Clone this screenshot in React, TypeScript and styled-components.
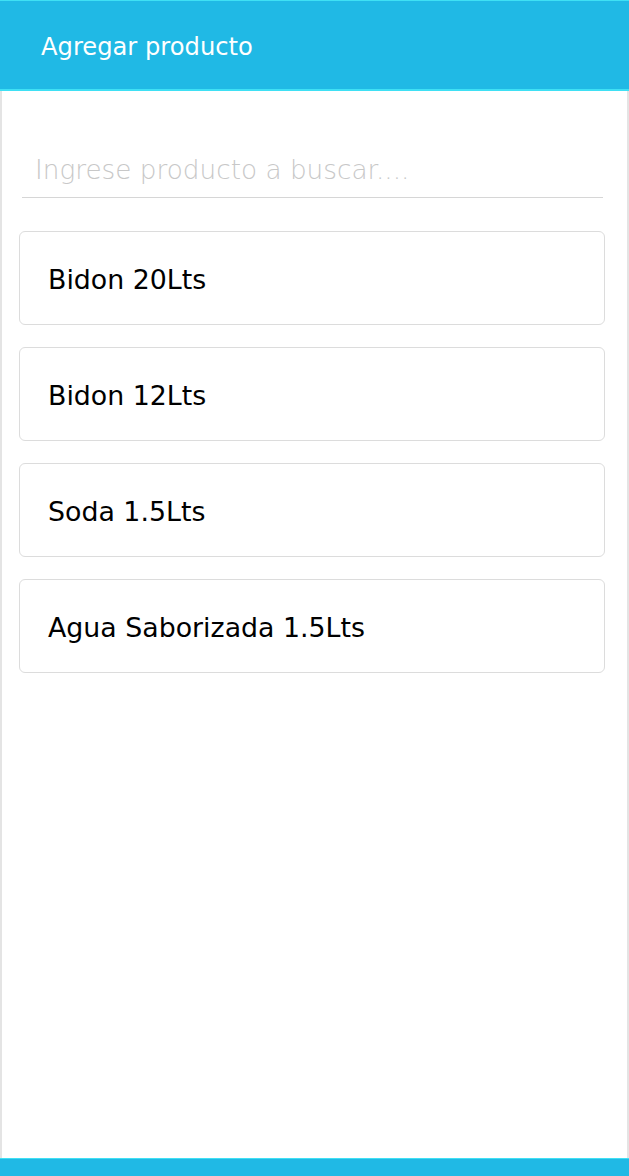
import React from "react";
import styled, { createGlobalStyle } from "styled-components";

const Global = createGlobalStyle`
  html, body { margin: 0; padding: 0; background: #ffffff; }
  * { box-sizing: border-box; }
  body { font-family: "DejaVu Sans", Lato, sans-serif; }
`;

const Frame = styled.div`
  min-height: 1176px;
  display: flex;
  flex-direction: column;
  border-left: 2px solid #e4e4e4;
  border-right: 2px solid #e4e4e4;
`;

const Header = styled.header`
  height: 91px;
  margin: 0 -2px;
  background: #20b9e5;
  border-top: 1px solid #3fe0f4;
  border-bottom: 2px solid #3fe0f4;
  display: flex;
  align-items: center;
  padding: 4px 0 0 41px;
`;

const Title = styled.h1`
  margin: 0;
  font-family: "DejaVu Sans", Lato, sans-serif;
  font-weight: 400;
  font-size: 24.2px;
  color: #ffffff;
`;

const Content = styled.main`
  flex: 1;
  display: flex;
  flex-direction: column;
  padding: 52px 22px 0 17px;
`;

const SearchInput = styled.input`
  margin: 0 0 33px 3px;
  width: 581px;
  height: 55px;
  border: none;
  border-bottom: 1px solid #d6d6d6;
  outline: none;
  padding: 0 0 1px 13px;
  font-family: "DejaVu Sans", Lato, sans-serif;
  font-size: 26.3px;
  font-weight: 200;
  color: #333;
  background: transparent;
  &::placeholder { color: #c8c8c8; }
`;

const List = styled.ul`
  list-style: none;
  margin: 0;
  padding: 0;
  display: flex;
  flex-direction: column;
  gap: 22px;
`;

const Card = styled.li`
  width: 586px;
  height: 94px;
  border: 1px solid #dcdcdc;
  border-radius: 6px;
  display: flex;
  align-items: center;
  padding: 2px 0 0 28px;
  font-family: "DejaVu Sans", Lato, sans-serif;
  font-size: 26.8px;
  color: #000;
`;

const Footer = styled.footer`
  height: 18px;
  margin: 0 -2px;
  background: #20b9e5;
  border-top: 1px solid #3fe0f4;
`;

const products = ["Bidon 20Lts", "Bidon 12Lts", "Soda 1.5Lts", "Agua Saborizada 1.5Lts"];

export default function App() {
  return (
    <>
      <Global />
      <Frame>
        <Header>
          <Title>Agregar producto</Title>
        </Header>
        <Content>
          <SearchInput placeholder="Ingrese producto a buscar...." />
          <List>
            {products.map((p) => (
              <Card key={p}>{p}</Card>
            ))}
          </List>
        </Content>
        <Footer />
      </Frame>
    </>
  );
}
